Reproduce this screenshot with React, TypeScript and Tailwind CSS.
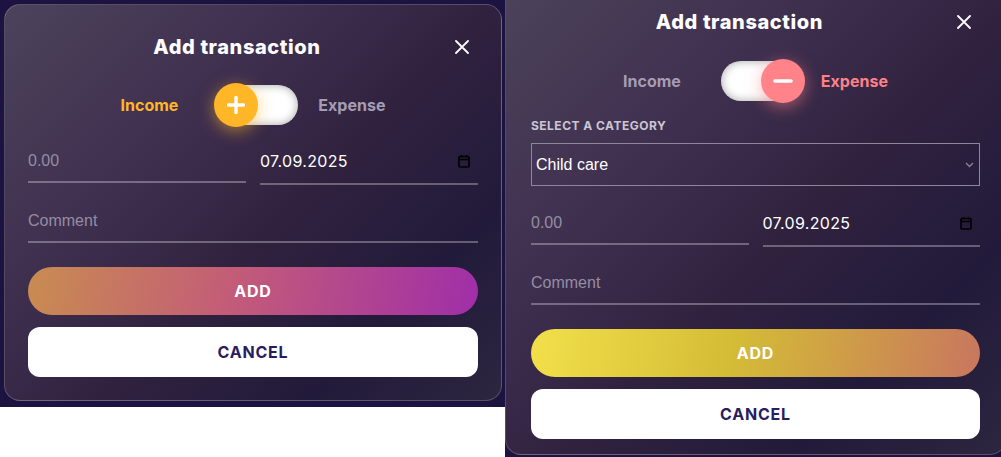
import React from "react";

type Mode = "income" | "expense";

const CloseIcon = () => (
  <svg width="14" height="14" viewBox="0 0 14 14" fill="none">
    <path d="M1 1L13 13M13 1L1 13" stroke="white" strokeWidth="1.8" strokeLinecap="round" />
  </svg>
);

const CalendarIcon = () => (
  <svg width="12" height="14" viewBox="0 0 12 14" fill="none">
    <rect x="1" y="2.5" width="10" height="10.5" rx="1" stroke="black" strokeWidth="1.6" />
    <path d="M1 5.5H11" stroke="black" strokeWidth="1.6" />
    <path d="M3.5 1V3.5M8.5 1V3.5" stroke="black" strokeWidth="1.6" />
  </svg>
);

const Toggle = ({ mode }: { mode: Mode }) => {
  const income = mode === "income";
  return (
    <div className="relative ml-[40px] mr-[20px] h-[40px] w-[80px] rounded-full bg-white shadow-[inset_0_0_10px_rgba(0,0,0,0.35)]">
      {income ? (
        <div className="absolute -left-[4px] -top-[2px] flex size-[44px] items-center justify-center rounded-full bg-[#ffb627] shadow-[0_4px_16px_rgba(255,182,39,0.55)]">
          <svg width="18" height="18" viewBox="0 0 18 18">
            <path d="M9 1.5V16.5M1.5 9H16.5" stroke="white" strokeWidth="3.4" strokeLinecap="round" />
          </svg>
        </div>
      ) : (
        <div className="absolute -right-[4px] -top-[2px] flex size-[44px] items-center justify-center rounded-full bg-[#ff8389] shadow-[0_4px_16px_rgba(255,131,137,0.55)]">
          <svg width="20" height="6" viewBox="0 0 20 6">
            <path d="M2 3H18" stroke="white" strokeWidth="3.6" strokeLinecap="round" />
          </svg>
        </div>
      )}
    </div>
  );
};

const Modal = ({ mode }: { mode: Mode }) => {
  const income = mode === "income";
  return (
    <div
      className={`rounded-2xl border border-white/20 bg-[linear-gradient(135deg,#4c435b_0%,#3e2e4e_35%,#30223f_55%,#221a3a_78%,#2c2640_100%)] font-['Inter',sans-serif] ${
        income ? "w-[498px] px-[23px] pb-[23px] pt-[28px]" : "w-[501px] px-[25px] pb-[15px] pt-[28px]"
      }`}
    >
      <div className="flex h-[28px] items-center">
        <h2 className="flex-1 text-center text-[20px] font-extrabold leading-[28px] tracking-[0.03em] text-white">
          Add transaction
        </h2>
        <button className="flex h-[28px] w-[32px] items-center justify-center">
          <CloseIcon />
        </button>
      </div>

      <div className={`flex h-[44px] items-center justify-center ${income ? "mt-[22px]" : "mt-[23px]"}`}>
        <span className={`text-[16px] font-bold ${income ? "text-[#ffb627]" : "text-[#a59db4]"}`}>Income</span>
        <Toggle mode={mode} />
        <span className={`text-[16px] font-bold ${income ? "text-[#a59db4]" : "text-[#ff8087]"}`}>Expense</span>
      </div>

      {!income && (
        <>
          <div className="mt-[15px] text-[12px] font-bold uppercase leading-[16px] tracking-[0.04em] text-[#cbc5d4]">
            Select a category
          </div>
          <div className="mt-[9px] flex h-[43px] items-center justify-between border border-[#8d879a] pl-[4px] pr-[5px] font-['Liberation_Sans',sans-serif] text-[16px] text-white">
            <span>Child care</span>
            <svg width="9" height="6" viewBox="0 0 9 6" fill="none">
              <path d="M1 1L4.5 4.5L8 1" stroke="#8a8398" strokeWidth="1.3" />
            </svg>
          </div>
        </>
      )}

      <div className={`grid grid-cols-2 items-start gap-[14px] ${income ? "mt-[22px]" : "mt-[25px]"}`}>
        <div className="border-b-2 border-white/30 pb-2 font-['Liberation_Sans',sans-serif] text-[16px] leading-[24px] text-[#958da3]">
          0.00
        </div>
        <div className="flex items-center justify-between border-b-2 border-white/30 pb-[10px] pr-[8px] text-[16px] leading-[24px] tracking-[0.02em] text-white">
          <span>07.09.2025</span>
          <CalendarIcon />
        </div>
      </div>

      <div className="mt-[24px] border-b-2 border-white/30 pb-2 font-['Liberation_Sans',sans-serif] text-[16px] leading-[24px] text-[#958da3]">
        Comment
      </div>

      <button
        className={`mt-[24px] flex h-[48px] w-full items-center justify-center rounded-full text-[16px] font-bold tracking-[0.05em] text-white ${
          income
            ? "bg-[linear-gradient(100deg,#c98c50_0%,#c35c78_45%,#a02ea8_100%)]"
            : "bg-[linear-gradient(100deg,#f2e04a_0%,#d4bc36_45%,#c8765f_100%)]"
        }`}
      >
        ADD
      </button>
      <button className="mt-[12px] flex h-[50px] w-full items-center justify-center rounded-xl bg-white text-[16px] font-bold tracking-[0.05em] text-[#2a1d5e]">
        CANCEL
      </button>
    </div>
  );
};

export default function App() {
  return (
    <div className="flex h-[457px] w-[1001px] overflow-hidden bg-white">
      <div className="w-[505px] shrink-0">
        <div className="bg-[#1d1340] pb-[6px] pl-[4px] pr-[3px] pt-[4px]">
          <Modal mode="income" />
        </div>
      </div>
      <div className="h-[457px] w-[496px] shrink-0 overflow-hidden bg-[#1d1340]">
        <div className="-mt-[21px]">
          <Modal mode="expense" />
        </div>
      </div>
    </div>
  );
}
